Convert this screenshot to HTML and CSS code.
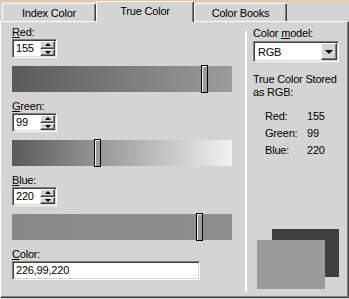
FILE: index.html
```html
<!DOCTYPE html>
<html lang="en">
<head>
  <meta charset="UTF-8">
  <title>Select Color</title>
  <link rel="stylesheet" href="styles.css">
</head>
<body>

<div class="dialog">
  <div class="tabs">
    <div class="tab tab-index">Index Color</div>
    <div class="tab tab-active">True Color</div>
    <div class="tab tab-books">Color Books</div>
  </div>

  <div class="panel">
    <div class="sliders">
      <div class="channel">
        <div class="label"><u>R</u>ed:</div>
        <div class="spin">
          <span class="spin-value">155</span>
          <span class="spin-buttons">
            <span class="spin-btn"><span class="arrow-up"></span></span>
            <span class="spin-btn"><span class="arrow-down"></span></span>
          </span>
        </div>
        <div class="track track-red"><span class="thumb" style="left: 189px"></span></div>
      </div>

      <div class="channel">
        <div class="label"><u>G</u>reen:</div>
        <div class="spin">
          <span class="spin-value">99</span>
          <span class="spin-buttons">
            <span class="spin-btn"><span class="arrow-up"></span></span>
            <span class="spin-btn"><span class="arrow-down"></span></span>
          </span>
        </div>
        <div class="track track-green"><span class="thumb" style="left: 82px"></span></div>
      </div>

      <div class="channel">
        <div class="label"><u>B</u>lue:</div>
        <div class="spin">
          <span class="spin-value">220</span>
          <span class="spin-buttons">
            <span class="spin-btn"><span class="arrow-up"></span></span>
            <span class="spin-btn"><span class="arrow-down"></span></span>
          </span>
        </div>
        <div class="track track-blue"><span class="thumb" style="left: 184px"></span></div>
      </div>

      <div class="color-field">
        <div class="label"><u>C</u>olor:</div>
        <div class="textbox">226,99,220</div>
      </div>
    </div>

    <div class="separator"></div>

    <div class="info">
      <div class="label">Color <u>m</u>odel:</div>
      <div class="select">
        <span class="select-value">RGB</span>
        <span class="select-btn"><span class="arrow-big"></span></span>
      </div>

      <div class="stored">True Color Stored<br>as RGB:</div>

      <div class="stats">
        <div class="stat"><span class="stat-name">Red:</span><span>155</span></div>
        <div class="stat"><span class="stat-name">Green:</span><span>99</span></div>
        <div class="stat"><span class="stat-name">Blue:</span><span>220</span></div>
      </div>

      <div class="preview">
        <div class="swatch-old"></div>
        <div class="swatch-new"></div>
      </div>
    </div>
  </div>
</div>

</body>
</html>
```

FILE: styles.css
```css
body {
  margin: 0;
  background-color: #d4d4d4;
  font-family: "Liberation Sans", Arial, sans-serif;
  font-size: 11px;
  line-height: 13px;
  letter-spacing: -0.2px;
  color: #000;
}

.dialog {
  width: 349px;
  height: 299px;
  box-sizing: border-box;
  border-top: 1px solid #f5c28e;
}

/* tab strip */
.tabs {
  display: flex;
  align-items: flex-end;
  height: 20px;
  padding-left: 2px;
}

.tab {
  box-sizing: border-box;
  height: 18px;
  padding-top: 3px;
  text-align: center;
  border-top: 1px solid #fff;
  border-left: 1px solid #fff;
  border-right: 1px solid #404040;
  border-radius: 2px 2px 0 0;
  box-shadow: inset -1px 0 #808080;
  background-color: #d4d4d4;
}

.tab-index {
  width: 94px;
}

.tab-books {
  width: 93px;
}

.tab-active {
  position: relative;
  z-index: 1;
  width: 98px;
  height: 21px;
  margin-bottom: -1px;
  padding-top: 3px;
}

/* page */
.panel {
  display: flex;
  box-sizing: border-box;
  height: 277px;
  border-top: 1px solid #fff;
  border-left: 1px solid #fff;
  border-right: 1px solid #404040;
  border-bottom: 1px solid #404040;
  box-shadow: inset -1px -1px #808080;
}

.sliders {
  width: 221px;
  padding: 4px 0 0 11px;
}

.label {
  height: 13px;
}

.channel {
  margin-bottom: 8px;
}

.spin,
.textbox,
.select {
  box-sizing: border-box;
  border: 1px solid;
  border-color: #808080 #fff #fff #808080;
  box-shadow: inset 1px 1px #404040, inset -1px -1px #d4d4d4;
  background-color: #fff;
}

.spin {
  display: flex;
  align-items: center;
  width: 45px;
  height: 19px;
}

.spin-value {
  flex: 1;
  padding-left: 3px;
}

.spin-buttons {
  display: flex;
  flex-direction: column;
  align-self: stretch;
  width: 15px;
  padding: 1px 1px 1px 0;
}

.spin-btn,
.select-btn {
  display: flex;
  align-items: center;
  justify-content: center;
  box-sizing: border-box;
  background-color: #d4d4d4;
  border: 1px solid;
  border-color: #fff #404040 #404040 #fff;
  box-shadow: inset -1px -1px #808080;
}

.spin-btn {
  flex: 1;
}

.arrow-up {
  border-left: 3px solid transparent;
  border-right: 3px solid transparent;
  border-bottom: 3px solid #000;
}

.arrow-down {
  border-left: 3px solid transparent;
  border-right: 3px solid transparent;
  border-top: 3px solid #000;
}

.track {
  position: relative;
  width: 220px;
  height: 26px;
  margin-top: 8px;
}

.track-red {
  background: linear-gradient(to right, #5a5a5a, #9c9c9c);
}

.track-green {
  background: linear-gradient(to right, #5a5a5a, #f2f2f2);
}

.track-blue {
  background: linear-gradient(to right, #888, #8e8e8e);
}

.thumb {
  position: absolute;
  top: -1px;
  width: 7px;
  height: 28px;
  box-sizing: border-box;
  border: 1px solid #000;
  background-color: #9c9c9c;
  box-shadow: inset 1px 1px #f0f0f0;
}

.color-field {
  margin-top: 7px;
}

.textbox {
  width: 188px;
  height: 19px;
  padding: 2px 0 0 3px;
}

.separator {
  width: 2px;
  margin: 9px 0 6px 12px;
  background-color: #fff;
}

/* right side */
.info {
  display: flex;
  flex-direction: column;
  flex: 1;
  padding: 5px 0 8px 6px;
}

.select {
  display: flex;
  align-items: center;
  width: 86px;
  height: 21px;
  margin-top: 1px;
  padding: 1px;
}

.select-value {
  flex: 1;
  padding: 1px 0 0 3px;
}

.select-btn {
  align-self: stretch;
  width: 16px;
}

.arrow-big {
  border-left: 4px solid transparent;
  border-right: 4px solid transparent;
  border-top: 4px solid #000;
}

.stored {
  margin-top: 11px;
}

.stats {
  margin-top: 9px;
  padding-left: 12px;
  line-height: 17px;
}

.stat {
  display: flex;
}

.stat-name {
  width: 42px;
}

.preview {
  position: relative;
  width: 82px;
  height: 60px;
  margin-top: auto;
  margin-left: 4px;
}

.swatch-old {
  position: absolute;
  left: 15px;
  top: 0;
  width: 67px;
  height: 48px;
  background-color: #404040;
}

.swatch-new {
  position: absolute;
  left: 0;
  top: 11px;
  width: 68px;
  height: 49px;
  background-color: #9a9a9a;
}
```
